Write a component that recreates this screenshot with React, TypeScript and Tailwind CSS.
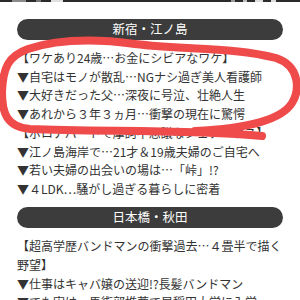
import React from "react";

const font = { fontFamily: '"Noto Sans CJK JP", "Noto Sans", sans-serif' };

function Section({ title, lines }: { title: string; lines: string[] }) {
  return (
    <div className="flex flex-col">
      <div className="mx-[17px] h-[21px] rounded-full bg-[#3c3c3c] flex items-center justify-center text-white text-[12.5px] leading-none">
        {title}
      </div>
      <div className="flex flex-col px-[17px] pt-[9px] pb-[8.5px] text-[12px] leading-[18.7px] text-[#333333]">
        {lines.map((l, i) => (
          <div key={i}>{l}</div>
        ))}
      </div>
    </div>
  );
}

export default function App() {
  return (
    <div className="relative w-[300px] h-[300px] overflow-hidden bg-white flex flex-col" style={font}>
      <div className="h-[6px] bg-[#2b2b2b] flex items-start justify-between px-[12px]">
        <div className="flex gap-[10px]">
          <div className="w-[14px] h-[2px] bg-[#8a8a8a]" />
          <div className="w-[5px] h-[2px] bg-[#777]" />
          <div className="w-[12px] h-[2px] bg-[#e0e0e0]" />
        </div>
        <div className="flex gap-[8px] pr-[12px]">
          <div className="w-[4px] h-[2px] bg-[#999]" />
          <div className="w-[4px] h-[2px] bg-[#bbb]" />
          <div className="w-[8px] h-[2px] bg-[#ddd]" />
          <div className="w-[5px] h-[2px] bg-[#ddd]" />
        </div>
      </div>
      <div className="pt-[17px] flex flex-col">
        <Section
          title="新宿・江ノ島"
          lines={[
            "【ワケあり24歳…お金にシビアなワケ】",
            "▼自宅はモノが散乱…NGナシ過ぎ美人看護師",
            "▼大好きだった父…深夜に号泣、壮絶人生",
            "▼あれから３年３ヵ月…衝撃の現在に驚愕",
            "【ボロアパートで摩訶不思議なシェアハウス】",
            "▼江ノ島海岸で…21才＆19歳夫婦のご自宅へ",
            "▼若い夫婦の出会いの場は…「峠」!?",
            "▼４LDK…騒がし過ぎる暮らしに密着",
          ]}
        />
        <Section
          title="日本橋・秋田"
          lines={[
            "【超高学歴バンドマンの衝撃過去…４畳半で描く野望】",
            "▼仕事はキャバ嬢の送迎!?長髪バンドマン",
            "▼でも実は、馬術部推薦で早稲田大学に入学",
          ]}
        />
      </div>
      <svg className="absolute left-0 top-0 pointer-events-none" width="300" height="300" viewBox="0 0 300 300">
        <path
          d="M 262 136 C 190 129 100 132 30 129 C 6 127 2 112 2 92 C 3 68 8 56 28 49 C 55 40 90 38 135 44 C 185 50 235 47 276 58 C 300 66 300 90 292 103 C 282 119 252 128 195 131"
          fill="none"
          stroke="#ef4b4b"
          strokeWidth="8"
          strokeLinecap="round"
          strokeLinejoin="round"
        />
      </svg>
    </div>
  );
}
